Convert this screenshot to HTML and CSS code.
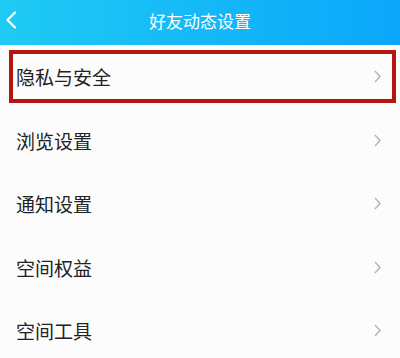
FILE: index.html
```html
<!DOCTYPE html>
<html lang="zh-CN">
<head>
  <meta charset="UTF-8" />
  <meta name="viewport" content="width=device-width, initial-scale=1.0"/>
  <title>好友动态设置</title>
  <link rel="stylesheet" href="styles.css">
</head>
<body>
  <div class="header">
    <span class="back">
      <svg width="12" height="18" viewBox="0 0 12 18">
        <path d="M10 1.5 L2.5 9 L10 16.5" fill="none" stroke="#fff" stroke-width="2.2" stroke-linecap="round" stroke-linejoin="round"/>
      </svg>
    </span>
    <span class="title">好友动态设置</span>
  </div>

  <div class="list">
    <div class="item marked">
      <span class="label">隐私与安全</span>
      <span class="arrow">
        <svg width="7" height="13" viewBox="0 0 7 13"><path d="M1 1 L6 6.5 L1 12" fill="none" stroke="#b3b3b3" stroke-width="1.4"/></svg>
      </span>
      <div class="highlight"></div>
    </div>
    <div class="item">
      <span class="label">浏览设置</span>
      <span class="arrow">
        <svg width="7" height="13" viewBox="0 0 7 13"><path d="M1 1 L6 6.5 L1 12" fill="none" stroke="#b3b3b3" stroke-width="1.4"/></svg>
      </span>
    </div>
    <div class="item">
      <span class="label">通知设置</span>
      <span class="arrow">
        <svg width="7" height="13" viewBox="0 0 7 13"><path d="M1 1 L6 6.5 L1 12" fill="none" stroke="#b3b3b3" stroke-width="1.4"/></svg>
      </span>
    </div>
    <div class="item">
      <span class="label">空间权益</span>
      <span class="arrow">
        <svg width="7" height="13" viewBox="0 0 7 13"><path d="M1 1 L6 6.5 L1 12" fill="none" stroke="#b3b3b3" stroke-width="1.4"/></svg>
      </span>
    </div>
    <div class="item">
      <span class="label">空间工具</span>
      <span class="arrow">
        <svg width="7" height="13" viewBox="0 0 7 13"><path d="M1 1 L6 6.5 L1 12" fill="none" stroke="#b3b3b3" stroke-width="1.4"/></svg>
      </span>
    </div>
  </div>
</body>
</html>
```

FILE: styles.css
```css
body {
  margin: 0;
  font-family: "Noto Sans CJK SC", "Noto Sans", sans-serif;
  background-color: #fcfcfd;
  color: #222;
}

.header {
  height: 45px;
  display: flex;
  align-items: center;
  justify-content: center;
  position: relative;
  background: linear-gradient(to right, #1fcbf4, #0ba6fb);
}

.back {
  position: absolute;
  left: 5px;
  top: 11px;
  display: flex;
}

.title {
  color: #fff;
  font-size: 17px;
  line-height: 1;
  margin-top: -5px;
}

.list {
  display: flex;
  flex-direction: column;
}

.item {
  height: 63.5px;
  display: flex;
  align-items: center;
  justify-content: space-between;
  padding: 0 19px 0 16px;
  position: relative;
}

.label {
  font-size: 19px;
  line-height: 1;
}

.arrow {
  display: flex;
}

.marked .label {
  margin-top: -1px;
}

.highlight {
  position: absolute;
  left: 9px;
  right: 4px;
  top: 5px;
  bottom: 6px;
  border: 4px solid #b8150f;
}
```
